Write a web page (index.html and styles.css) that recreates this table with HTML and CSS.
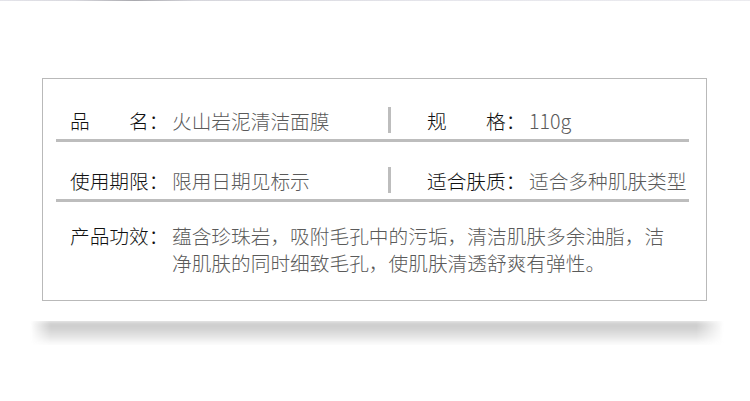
FILE: index.html
```html
<!DOCTYPE html>
<html lang="zh-CN">
<head>
<meta charset="utf-8">
<title>产品信息</title>
<link rel="stylesheet" href="styles.css">
</head>
<body>
<div class="topline"></div>
<div class="card">
  <div class="row">
    <div class="cell cell-left">
      <span class="label">品&#12288;&#12288;名：</span>
      <span class="value">火山岩泥清洁面膜</span>
    </div>
    <div class="bar"></div>
    <div class="cell cell-right">
      <span class="label">规&#12288;&#12288;格：</span>
      <span class="value">110g</span>
    </div>
  </div>
  <div class="row">
    <div class="cell cell-left">
      <span class="label">使用期限：</span>
      <span class="value">限用日期见标示</span>
    </div>
    <div class="bar"></div>
    <div class="cell cell-right">
      <span class="label">适合肤质：</span>
      <span class="value">适合多种肌肤类型</span>
    </div>
  </div>
  <div class="row-desc">
    <span class="label">产品功效：</span>
    <p class="value desc">蕴含珍珠岩，吸附毛孔中的污垢，清洁肌肤多余油脂，洁净肌肤的同时细致毛孔，使肌肤清透舒爽有弹性。</p>
  </div>
</div>
<div class="shadow"></div>
</body>
</html>
```
FILE: styles.css
```css
html, body {
  margin: 0;
  padding: 0;
  background: #ffffff;
}
body {
  width: 750px;
  height: 401px;
  overflow: hidden;
  font-family: "Noto Sans CJK SC", "Noto Sans", sans-serif;
  font-weight: 300;
  font-size: 19.7px;
  color: #222;
}
.topline {
  height: 1px;
  background: linear-gradient(to right, #e4e4ea 0%, #d8d8de 10%, #a9a9ae 18%, #d6d6dc 26%, #e6e6ec 60%, #ebebef 100%);
}
.card {
  box-sizing: border-box;
  margin: 77px 0 0 42px;
  width: 665px;
  height: 223px;
  border: 1px solid #b9b9b9;
  padding: 3px 17px 0 13px;
}
.row {
  display: flex;
  align-items: center;
  height: 38px;
  padding: 19px 0 0 14px;
  border-bottom: 3px solid #bdbdbd;
}
.cell {
  display: flex;
  align-items: center;
  white-space: nowrap;
  line-height: 27px;
}
.cell-left {
  width: 318px;
}
.cell-right {
  padding-left: 36px;
}
.bar {
  width: 3px;
  height: 26px;
  background: #bdbdbd;
}
.label {
  display: inline-block;
  width: 102px;
  color: #111;
  flex: none;
}
.value {
  color: #5a5a5a;
}
.row-desc {
  display: flex;
  align-items: flex-start;
  padding: 20px 0 0 14px;
  line-height: 27px;
}
.desc {
  margin: 0;
  width: 500px;
}
.shadow {
  margin: 20px 0 0 30px;
  width: 694px;
  height: 24px;
  background: linear-gradient(to bottom, #c9c9c9 0%, #d3d3d3 35%, #ececec 75%, #ffffff 100%);
  -webkit-mask-image: linear-gradient(to right, transparent 0%, #000 3%, #000 96%, transparent 100%);
  mask-image: linear-gradient(to right, transparent 0%, #000 3%, #000 96%, transparent 100%);
  filter: blur(2px);
}
```
